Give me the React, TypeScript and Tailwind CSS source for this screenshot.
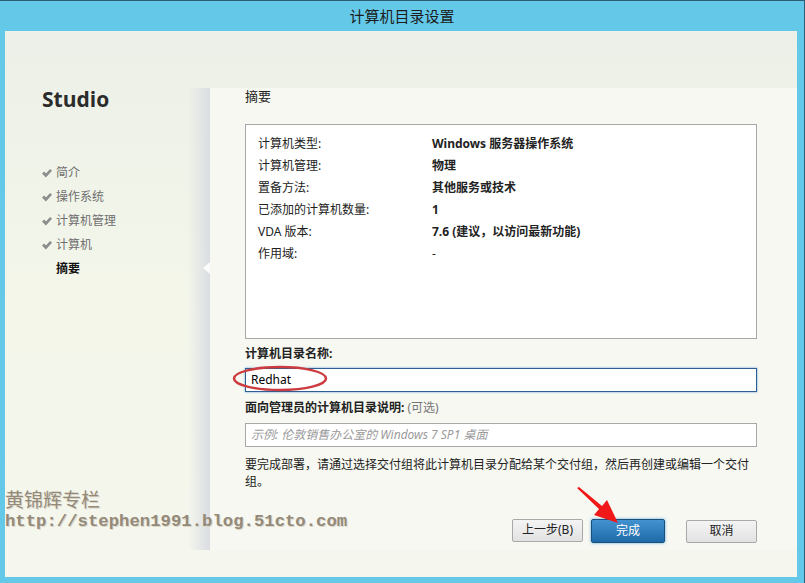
import { ReactNode } from 'react'

const cjk = { fontFamily: '"Noto Sans", "Noto Sans CJK SC", sans-serif' }

const steps = ['简介', '操作系统', '计算机管理', '计算机']

const summary: { label: string; value: string; bold?: boolean }[] = [
  { label: '计算机类型:', value: 'Windows 服务器操作系统', bold: true },
  { label: '计算机管理:', value: '物理', bold: true },
  { label: '置备方法:', value: '其他服务或技术', bold: true },
  { label: '已添加的计算机数量:', value: '1', bold: true },
  { label: 'VDA 版本:', value: '7.6 (建议，以访问最新功能)', bold: true },
  { label: '作用域:', value: '-' },
]

function Tick() {
  return (
    <svg width="10" height="9" viewBox="0 0 10 9" className="shrink-0">
      <path d="M0 4.6 L2.3 2.6 L3.9 4.4 L8.1 0 L10 1.8 L3.9 8.6 Z" fill="#8c8c8c" />
    </svg>
  )
}

function Button({ children, primary }: { children: ReactNode; primary?: boolean }) {
  return (
    <button
      className={
        primary
          ? 'h-[24px] w-[74px] rounded-[2px] border border-[#1d4f7e] bg-gradient-to-b from-[#4393d0] to-[#1e6aa8] text-[12px] text-white shadow-[0_0_3px_#5aa6dd]'
          : 'h-[23px] w-[71px] rounded-[2px] border border-[#a9a9a9] bg-gradient-to-b from-[#f4f4f4] to-[#e2e2e2] text-[12px] text-[#222]'
      }
    >
      {children}
    </button>
  )
}

export default function App() {
  return (
    <div
      className="relative flex h-[583px] w-[805px] flex-col overflow-hidden border-t border-r border-[#2c5f75] bg-[#64c9e9]"
      style={cjk}
    >
      {/* title bar */}
      <div className="flex h-[30px] shrink-0 items-center justify-center text-[15px] text-[#1c1c1c]">
        计算机目录设置
      </div>

      {/* window body */}
      <div className="mb-[6px] ml-[5px] mr-[7px] flex flex-1 bg-gradient-to-b from-[#edf0e8] via-[#f3f6e9] to-[#f5f7ee]">
        {/* sidebar */}
        <div className="w-[205px] shrink-0 pl-[37px]">
          <div className="mt-[54px] text-[21px] font-bold leading-[28px] text-[#2b2b2b]" style={{ fontFamily: '"Open Sans", sans-serif' }}>
            Studio
          </div>
          <div className="mt-[48px] flex flex-col">
            {steps.map((s) => (
              <div key={s} className="flex h-[24px] items-center gap-[4px] text-[12px] text-[#6f6f6f]">
                <Tick />
                <span>{s}</span>
              </div>
            ))}
            <div className="flex h-[24px] items-center pl-[14px] text-[12px] font-bold text-[#111]">摘要</div>
          </div>
        </div>

        {/* main panel */}
        <div className="relative mb-[27px] mt-[57px] flex flex-1 flex-col bg-[#f6f8f1] pl-[35px] pr-[40px]">
          <div className="absolute right-full top-0 bottom-0 w-[22px] bg-gradient-to-r from-transparent to-[#dadde2]" />
          <div className="absolute left-[-7px] top-[174px] h-0 w-0 border-y-[6px] border-r-[7px] border-y-transparent border-r-[#fbfbfb]" />

          <div className="text-[13px] leading-[17px] text-[#222]">摘要</div>

          <div className="mt-[19px] h-[215px] border border-[#a8a8a8] bg-white pl-[12px] pt-[8px]">
            {summary.map((r) => (
              <div key={r.label} className="flex h-[22px] items-center text-[12px] text-[#222]">
                <span className="w-[174px] shrink-0">{r.label}</span>
                <span className={r.bold ? 'font-bold' : ''}>{r.value}</span>
              </div>
            ))}
          </div>

          <div className="mt-[6px] text-[12px] font-bold leading-[17px] text-[#222]">计算机目录名称:</div>
          <div className="mt-[6px] flex h-[24px] items-center border border-[#2f5f92] bg-white pl-[5px] text-[12px] text-black shadow-[0_0_2px_#6a9fd3]">
            Redhat
          </div>

          <div className="mt-[7px] text-[12px] leading-[17px] text-[#222]">
            <span className="font-bold">面向管理员的计算机目录说明:</span>{' '}
            <span className="text-[#777]">(可选)</span>
          </div>
          <div className="mt-[7px] flex h-[24px] items-center border border-[#a8a8a8] bg-white pl-[5px] text-[12px] italic text-[#9a9a9a]">
            示例: 伦敦销售办公室的 Windows 7 SP1 桌面
          </div>

          <p className="mt-[9px] text-[12px] leading-[17px] text-[#222]">
            要完成部署，请通过选择交付组将此计算机目录分配给某个交付组，然后再创建或编辑一个交付组。
          </p>

          <div className="mt-[27px] flex items-center justify-end">
            <Button>上一步(B)</Button>
            <div className="ml-[8px]">
              <Button primary>完成</Button>
            </div>
            <div className="ml-[21px]">
              <Button>取消</Button>
            </div>
          </div>
        </div>
      </div>

      {/* annotations */}
      <svg className="pointer-events-none absolute left-0 top-0" width="805" height="583">
        <ellipse cx="280" cy="377.5" rx="46" ry="11.5" fill="none" stroke="#cc3b3f" strokeWidth="2.5" />
        <polygon points="577,487 579,486 602,505 607,499 618,522 594,514 599,508" fill="#f01818" />
      </svg>

      {/* watermark */}
      <div className="pointer-events-none absolute left-[5px] top-[486px] flex flex-col text-[#948a79] [text-shadow:1px_1px_0_#dcd6ca]">
        <span className="text-[19px] leading-[24px]" style={{ fontFamily: '"Noto Sans CJK SC", serif' }}>黄锦辉专栏</span>
        <span className="text-[17.3px] font-bold leading-[22px]" style={{ fontFamily: '"Liberation Mono", monospace' }}>
          http://stephen1991.blog.51cto.com
        </span>
      </div>
    </div>
  )
}
